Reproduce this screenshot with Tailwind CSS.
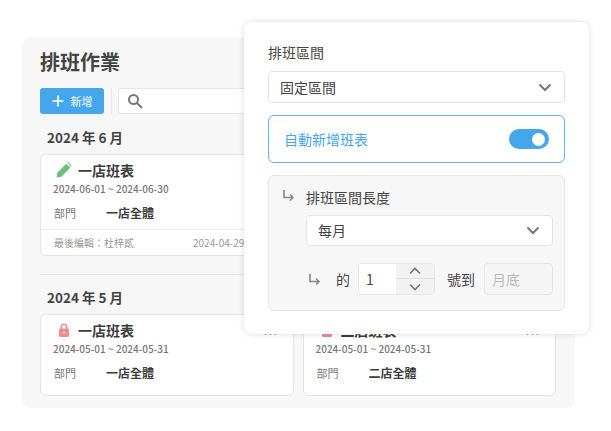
<!DOCTYPE html>
<html lang="zh-Hant">
<head>
  <meta charset="UTF-8">
  <script src="https://cdn.jsdelivr.net/npm/@tailwindcss/browser@4"></script>
  <title>排班作業</title>
</head>
<body class="bg-white">
  <div class="relative w-[611px] h-[431px] overflow-hidden font-['Noto_Sans_CJK_TC','Noto_Sans',sans-serif] text-[#3d3d3d]">
    <!-- Background panel -->
    <div class="absolute left-[22px] top-[37px] w-[553px] h-[371px] bg-[#f7f7f7] rounded-lg pl-[18px] pr-[19px] pt-[10px]">
      <h1 class="text-[20px] leading-[30px] font-bold text-[#444]">排班作業</h1>
      <div class="flex items-center mt-[11px] h-[26px]">
        <button class="w-[64px] h-[26px] bg-[#45a6ec] rounded-[3px] flex items-center justify-center gap-[7px] text-white text-[11px]">
          <svg width="12" height="12" viewBox="0 0 12 12" fill="none" stroke="white" stroke-width="1.600"><path d="M6 0.500v11M0.500 6h11"/></svg>
          新增
        </button>
        <div class="w-px h-[26px] bg-[#e6e6e6] mx-[6px] ml-[7px]"></div>
        <div class="flex-1 h-[26px] bg-white border border-[#e6e6e6] rounded-[3px] flex items-center pl-[8px]">
          <svg width="16" height="16" viewBox="0 0 16 16" fill="none" stroke="#777" stroke-width="2"><circle cx="6.500" cy="6.500" r="4.500"/><path d="M10 10l5 5"/></svg>
        </div>
      </div>
      <h2 class="text-[13.500px] leading-[18px] font-bold text-[#444] mt-[14px] ml-[7px]">2024 年 6 月</h2>
      <div class="grid grid-cols-2 gap-[9px] mt-[8px]">
        <div class="h-[102px] bg-white border border-[#e4e4e4] rounded-md">
          <div class="flex items-center pl-[15px] pt-[4px] h-[26px]">
            <svg width="16" height="16" viewBox="0 0 16 16" fill="#6cc07a"><path d="M0.500 15.500l0.800-4.800L10.200 1.800l4 4L5.300 14.700z"/><path d="M11.200 0.800l1-.5 3.400 3.400-.5 1z"/></svg>
            <span class="ml-[6px] text-[14px] leading-[20px] font-bold">一店班表</span>
          </div>
          <div class="ml-[12px] text-[10px] leading-[14px] font-medium text-[#777] mt-[1px]">2024-06-01 ~ 2024-06-30</div>
          <div class="flex ml-[13px] mt-[9px] leading-[16px] items-center">
            <span class="w-[52px] text-[11px] text-[#777]">部門</span><span class="text-[12px] font-bold">一店全體</span>
          </div>
          <div class="border-t border-[#eee] mt-[8px] pt-[6px] pl-[13px] flex text-[10px] leading-[14px] text-[#999]">
            <span class="w-[139px]">最後編輯：杜梓貳</span><span>2024-04-29 12:00</span>
          </div>
        </div>
        <div class="h-[102px] bg-white border border-[#e4e4e4] rounded-md"></div>
      </div>
      <div class="h-px bg-[#e4e4e4] mt-[18px]"></div>
      <h2 class="text-[13.500px] leading-[18px] font-bold text-[#444] mt-[13px] ml-[7px]">2024 年 5 月</h2>
      <div class="grid grid-cols-2 gap-[9px] mt-[8px]">
        <div class="relative h-[82px] bg-white border border-[#e4e4e4] rounded-md">
          <div class="flex items-center pl-[15px] pt-[4px] h-[26px]">
            <svg width="16" height="16" viewBox="0 0 16 16"><path d="M5.200 7V5a2.800 2.800 0 0 1 5.600 0v2" fill="none" stroke="#f08d8d" stroke-width="1.500"/><rect x="3" y="6.500" width="10" height="8.500" rx="1.500" fill="#f08d8d"/><circle cx="8" cy="10.800" r="1" fill="white"/></svg>
            <span class="ml-[6px] text-[14px] leading-[20px] font-bold">一店班表</span>
          </div>
          <div class="ml-[12px] text-[10px] leading-[14px] font-medium text-[#777] mt-[1px]">2024-05-01 ~ 2024-05-31</div>
          <div class="flex ml-[13px] mt-[9px] leading-[16px] items-center">
            <span class="w-[52px] text-[11px] text-[#777]">部門</span><span class="text-[12px] font-bold">一店全體</span>
          </div>
          <svg class="absolute right-[16px] top-[17px]" width="13" height="3" viewBox="0 0 13 3" fill="#888"><circle cx="1.500" cy="1.500" r="1.200"/><circle cx="6.500" cy="1.500" r="1.200"/><circle cx="11.500" cy="1.500" r="1.200"/></svg>
        </div>
        <div class="relative h-[82px] bg-white border border-[#e4e4e4] rounded-md">
          <div class="flex items-center pl-[15px] pt-[4px] h-[26px]">
            <svg width="16" height="16" viewBox="0 0 16 16"><path d="M5.200 7V5a2.800 2.800 0 0 1 5.600 0v2" fill="none" stroke="#f08d8d" stroke-width="1.500"/><rect x="3" y="6.500" width="10" height="8.500" rx="1.500" fill="#f08d8d"/><circle cx="8" cy="10.800" r="1" fill="white"/></svg>
            <span class="ml-[6px] text-[14px] leading-[20px] font-bold">二店班表</span>
          </div>
          <div class="ml-[12px] text-[10px] leading-[14px] font-medium text-[#777] mt-[1px]">2024-05-01 ~ 2024-05-31</div>
          <div class="flex ml-[13px] mt-[9px] leading-[16px] items-center">
            <span class="w-[52px] text-[11px] text-[#777]">部門</span><span class="text-[12px] font-bold">二店全體</span>
          </div>
          <svg class="absolute right-[16px] top-[17px]" width="13" height="3" viewBox="0 0 13 3" fill="#888"><circle cx="1.500" cy="1.500" r="1.200"/><circle cx="6.500" cy="1.500" r="1.200"/><circle cx="11.500" cy="1.500" r="1.200"/></svg>
        </div>
      </div>
    </div>

    <!-- Popover -->
    <div class="absolute left-[244px] top-[22px] w-[345px] h-[312px] bg-white rounded-lg shadow-[0_0_6px_rgba(0,0,0,0.14)] px-[24px] pt-[20px]">
      <div class="text-[14px] leading-[20px] text-[#444]">排班區間</div>
      <div class="mt-[9px] h-[32px] border border-[#e4e4e4] rounded-[4px] flex items-center justify-between pl-[11px] pr-[12px] text-[14px] text-[#444]">
        固定區間
        <svg width="14" height="9" viewBox="0 0 14 9" fill="none" stroke="#777" stroke-width="2"><path d="M1.500 1.500L7 7l5.500-5.500"/></svg>
      </div>
      <div class="mt-[12px] h-[48px] border border-[#63b3ee] rounded-md flex items-center justify-between pl-[15px] pr-[15px] text-[14px] text-[#45a6ec]">
        自動新增班表
        <div class="w-[40px] h-[20px] rounded-full bg-[#45a6ec] flex items-center justify-end pr-[4px]">
          <div class="w-[13px] h-[13px] rounded-full bg-white"></div>
        </div>
      </div>
      <div class="mt-[12px] h-[136px] bg-[#f7f7f7] border border-[#e6e6e6] rounded-md relative pl-[37px] pr-[11px] pt-[11px]">
        <svg class="absolute left-[13px] top-[13px]" width="13" height="13" viewBox="0 0 13 13" fill="none" stroke="#888" stroke-width="1.600"><path d="M2 1v7.500h9M8 5.500l3 3-3 3"/></svg>
        <div class="text-[14px] leading-[20px] text-[#444]">排班區間長度</div>
        <div class="mt-[8px] h-[31px] bg-white border border-[#e6e6e6] rounded-[4px] flex items-center justify-between pl-[11px] pr-[12px] text-[14px] text-[#444]">
          每月
          <svg width="14" height="9" viewBox="0 0 14 9" fill="none" stroke="#777" stroke-width="2"><path d="M1.500 1.500L7 7l5.500-5.500"/></svg>
        </div>
        <div class="flex items-center mt-[17px] h-[32px] text-[14px] text-[#444]">
          <svg class="ml-[2px]" width="13" height="13" viewBox="0 0 13 13" fill="none" stroke="#888" stroke-width="1.600"><path d="M2 1v7.500h9M8 5.500l3 3-3 3"/></svg>
          <span class="ml-[15px]">的</span>
          <div class="ml-[8px] w-[77px] h-[32px] border border-[#e6e6e6] rounded-[4px] flex overflow-hidden">
            <div class="w-[37px] bg-white pl-[7px] leading-[30px]">1</div>
            <div class="flex-1 flex flex-col">
              <div class="h-[15px] bg-[#f2f2f2] flex items-center justify-center border-b border-[#e0e0e0]"><svg width="12" height="8" viewBox="0 0 12 8" fill="none" stroke="#777" stroke-width="1.600"><path d="M1 6.500L6 1.500l5 5"/></svg></div>
              <div class="flex-1 bg-[#f2f2f2] flex items-center justify-center"><svg width="12" height="8" viewBox="0 0 12 8" fill="none" stroke="#777" stroke-width="1.600"><path d="M1 1.500L6 6.500l5-5"/></svg></div>
            </div>
          </div>
          <span class="ml-[12px]">號到</span>
          <div class="ml-[9px] flex-1 h-[32px] bg-[#f5f5f5] border border-[#e6e6e6] rounded-[4px] pl-[7px] leading-[30px] text-[#bbb]">月底</div>
        </div>
      </div>
    </div>
  </div>
</body>
</html>
